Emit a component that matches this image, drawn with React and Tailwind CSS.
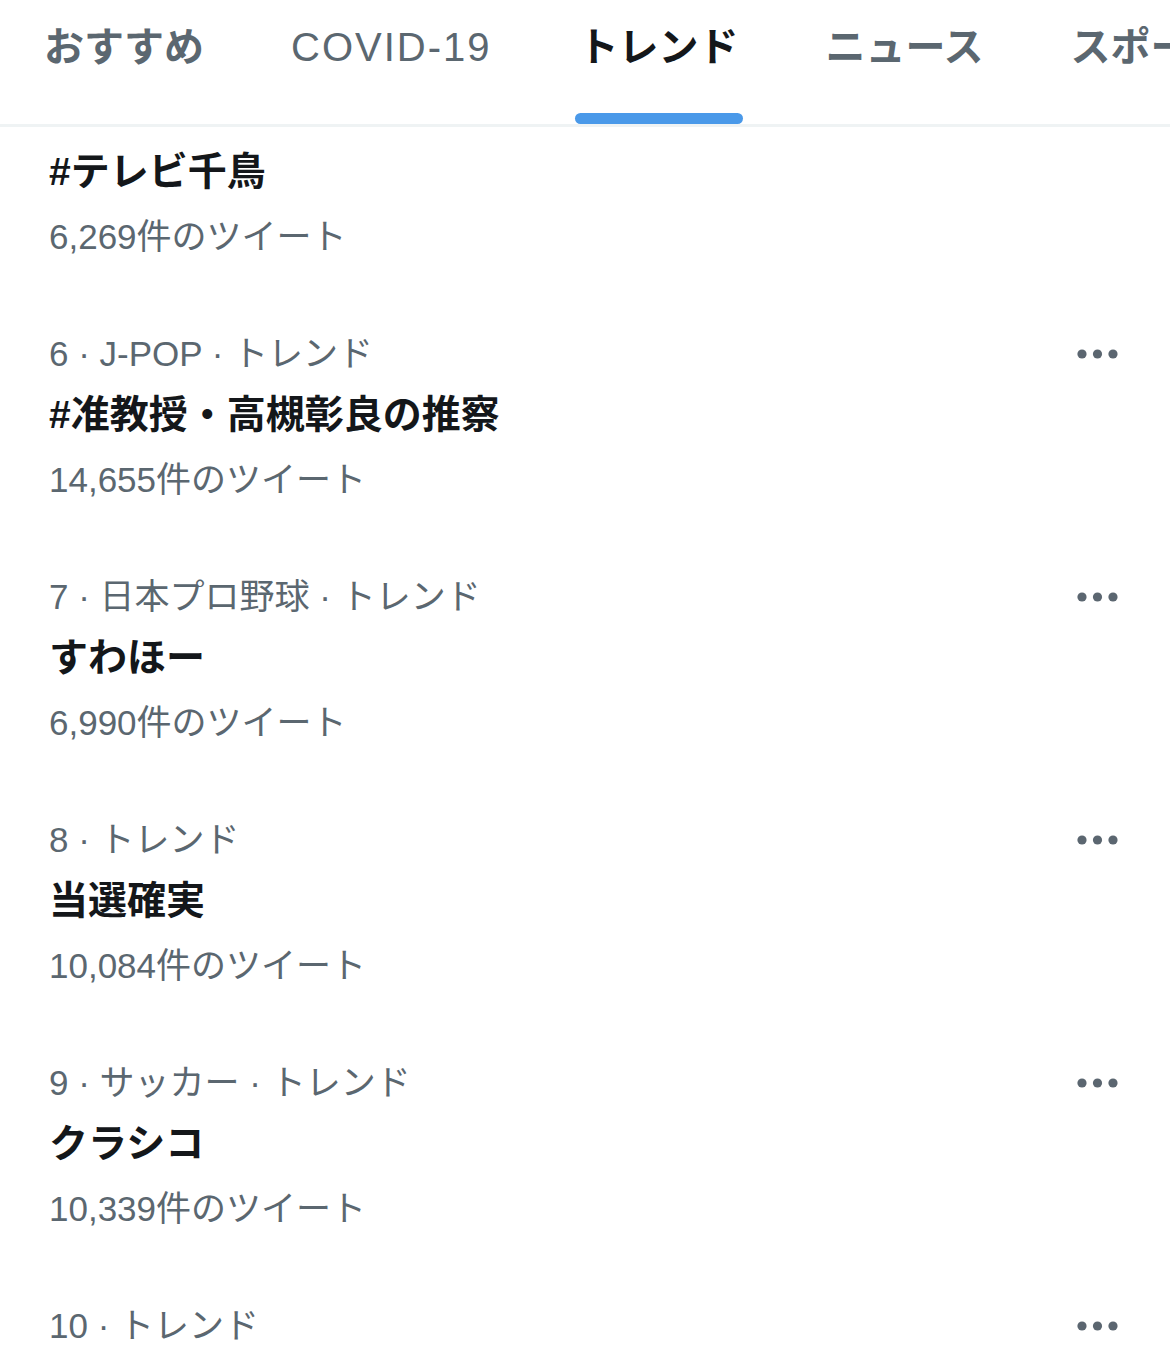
import React from 'react';

const FONT = { fontFamily: '"Liberation Sans", "Noto Sans CJK JP", sans-serif' };

const tabs = [
  { label: 'おすすめ' },
  { label: 'COVID-19', latin: true },
  { label: 'トレンド', active: true },
  { label: 'ニュース' },
  { label: 'スポーツ' },
];

const trends = [
  { meta: '6 · J-POP · トレンド', title: '#准教授・高槻彰良の推察', count: '14,655件のツイート' },
  { meta: '7 · 日本プロ野球 · トレンド', title: 'すわほー', count: '6,990件のツイート' },
  { meta: '8 · トレンド', title: '当選確実', count: '10,084件のツイート' },
  { meta: '9 · サッカー · トレンド', title: 'クラシコ', count: '10,339件のツイート' },
  { meta: '10 · トレンド', title: '', count: '' },
];

function MoreDots() {
  return (
    <svg width="42" height="12" viewBox="0 0 42 12" className="shrink-0">
      <circle cx="5" cy="6" r="4.6" fill="#5b6670" />
      <circle cx="20.5" cy="6" r="4.6" fill="#5b6670" />
      <circle cx="36" cy="6" r="4.6" fill="#5b6670" />
    </svg>
  );
}

function TrendItem({ meta, title, count }) {
  return (
    <div className="flex pl-[49px] pr-[51px] pt-[30px] pb-[33px]">
      <div className="flex-1 min-w-0">
        <div className="h-[50px] flex items-center text-[35px] text-[#5b6770] whitespace-nowrap">{meta}</div>
        <div className="h-[72px] flex items-center text-[39px] font-bold text-[#14171a] whitespace-nowrap">{title}</div>
        <div className="h-[58px] flex items-center text-[35px] text-[#5b6770] whitespace-nowrap">{count}</div>
      </div>
      <div className="h-[50px] flex items-center">
        <MoreDots />
      </div>
    </div>
  );
}

export default function App() {
  return (
    <div className="w-[1170px] h-[1347px] overflow-hidden bg-white" style={FONT}>
      <header className="border-b-[3px] border-[#eff3f4]">
        <nav className="flex gap-[87px] pl-[44px] h-[124px] overflow-hidden whitespace-nowrap">
          {tabs.map((t) => (
            <div key={t.label} className="relative shrink-0">
              <div
                className={`h-[94px] flex items-center text-[40px] ${t.active ? 'font-bold text-[#14171a]' : 'font-bold text-[#5b6770]'} ${t.latin ? 'font-normal tracking-[2px]' : ''}`}
              >
                {t.label}
              </div>
              {t.active && (
                <div className="absolute left-[-4px] w-[168px] bottom-0 h-[11px] rounded-full bg-[#4a99e9]" />
              )}
            </div>
          ))}
        </nav>
      </header>

      <main>
        <div className="pl-[49px] pt-[9px] pb-[33px]">
          <div className="h-[72px] flex items-center text-[39px] font-bold text-[#14171a]">#テレビ千鳥</div>
          <div className="h-[58px] flex items-center text-[35px] text-[#5b6770]">6,269件のツイート</div>
        </div>
        {trends.map((t) => (
          <TrendItem key={t.meta} {...t} />
        ))}
      </main>
    </div>
  );
}
